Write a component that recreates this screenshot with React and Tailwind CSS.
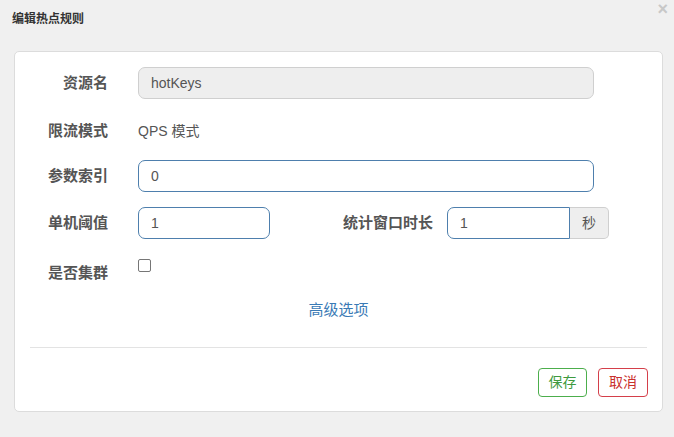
export default function App() {
    const font = { fontFamily: '"Liberation Sans", "Noto Sans CJK SC", sans-serif' };
    const label = 'text-[15px] font-bold text-[#555] text-right leading-[20px]';
    return (
        <div className="relative w-[674px] h-[437px] bg-[#f0f0f0] overflow-hidden" style={font}>
            <div className="h-[51px] pl-[12px] pt-[11px]">
                <h4 className="text-[12px] font-bold text-[#333] leading-[16px]">编辑热点规则</h4>
            </div>
            <button className="absolute top-[1px] right-[6px] text-[18px] font-bold leading-[16px] text-[#c8c8c8]">×</button>

            <div className="ml-[14px] w-[649px] h-[361px] bg-white border border-[#dcdcdc] rounded-[5px] pt-[15px]">
                <div className="flex items-center h-[32px]">
                    <div className={`w-[93px] ${label}`}>资源名</div>
                    <div className="ml-[30px] w-[456px] h-[32px] flex items-center px-[12px] bg-[#eeeeee] border border-[#cfcfcf] rounded-[7px] text-[14px] text-[#555]">
                        hotKeys
                    </div>
                </div>

                <div className="flex items-center h-[32px] mt-[16px]">
                    <div className={`w-[93px] ${label}`}>限流模式</div>
                    <div className="ml-[30px] text-[14px] text-[#555]">QPS 模式</div>
                </div>

                <div className="flex items-center h-[32px] mt-[13px]">
                    <div className={`w-[93px] ${label}`}>参数索引</div>
                    <div className="ml-[30px] w-[456px] h-[32px] flex items-center px-[12px] bg-white border border-[#4e7fad] rounded-[7px] text-[14px] text-[#555]">
                        0
                    </div>
                </div>

                <div className="flex items-center h-[32px] mt-[15px]">
                    <div className={`w-[93px] ${label}`}>单机阈值</div>
                    <div className="ml-[30px] w-[132px] h-[32px] flex items-center px-[12px] bg-white border border-[#4e7fad] rounded-[7px] text-[14px] text-[#555]">
                        1
                    </div>
                    <div className={`w-[163px] ${label}`}>统计窗口时长</div>
                    <div className="ml-[14px] w-[123px] h-[32px] flex items-center px-[12px] bg-white border border-[#4e7fad] rounded-l-[7px] text-[14px] text-[#555]">
                        1
                    </div>
                    <div className="w-[39px] h-[32px] flex items-center justify-center bg-[#eeeeee] border border-l-0 border-[#cfcfcf] rounded-r-[5px] text-[14px] text-[#555]">
                        秒
                    </div>
                </div>

                <div className="flex items-start h-[34px] mt-[16px]">
                    <div className={`w-[93px] mt-[8px] ${label}`}>是否集群</div>
                    <div className="ml-[30px] mt-[4px] w-[13px] h-[13px] border border-[#767676] rounded-[2px] bg-white"></div>
                </div>

                <div className="flex justify-center mt-[11px]">
                    <a className="text-[15px] text-[#3a7ab5] leading-[20px]">高级选项</a>
                </div>

                <div className="mx-[15px] mt-[27px] border-t border-[#e3e3e3]"></div>

                <div className="flex justify-end gap-[11px] pr-[14px] mt-[20px]">
                    <button className="w-[49px] h-[29px] border border-[#4cae4c] rounded-[4px] text-[14px] text-[#3e9a3e] bg-white">保存</button>
                    <button className="w-[50px] h-[29px] border border-[#d43f4a] rounded-[4px] text-[14px] text-[#c9302c] bg-white">取消</button>
                </div>
            </div>
        </div>
    );
}
